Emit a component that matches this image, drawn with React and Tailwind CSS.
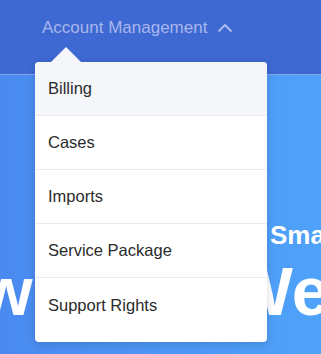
export default function App() {
  const items = ['Billing', 'Cases', 'Imports', 'Service Package', 'Support Rights'];

  return (
    <div className="relative w-[321px] h-[354px] overflow-hidden font-['Liberation_Sans',Arial,sans-serif]">
      {/* top nav */}
      <div className="h-[75px] bg-[#3e69d3] border-b border-[#86a6ec] flex items-start pl-[42px] pt-[18px]">
        <div className="flex items-center gap-[10px] text-[#a8b6ec] text-[17px] leading-[20px]">
          <span>Account Management</span>
          <svg width="16" height="10" viewBox="0 0 16 10" fill="none" stroke="currentColor" strokeWidth="2.2">
            <path d="M1.5 8.5 L8 2 L14.5 8.5" />
          </svg>
        </div>
      </div>

      {/* hero */}
      <div className="h-[279px] bg-gradient-to-r from-[#4a8af0] to-[#4fa2f9] overflow-hidden text-white font-bold">
        <div className="pt-[145px] pl-[270px] text-[26px] leading-[30px] whitespace-nowrap">Smart Service Center</div>
        <div className="mt-[7px] ml-[-111px] text-[68px] leading-[68px] whitespace-nowrap [word-spacing:15px]">How Can We Help?</div>
      </div>

      {/* dropdown */}
      <div className="absolute left-[35px] top-[62px] w-[232px] bg-white rounded-[4px] shadow-[0_2px_8px_rgba(0,0,0,0.15)]">
        <div className="absolute left-[16px] top-[-15px] w-0 h-0 border-l-[15px] border-r-[15px] border-b-[15px] border-l-transparent border-r-transparent border-b-[#f5f6fa]" />
        {items.map((item, i) => (
          <div
            key={item}
            className={`flex items-center pl-[13px] text-[16.5px] text-[#2b2b2b] ${i === 0 ? 'bg-[#f5f6fa] rounded-t-[4px]' : ''} ${i === items.length - 1 ? 'h-[64px] pb-[9px]' : 'h-[54px] border-b border-[#e9ebef]'}`}
          >
            {item}
          </div>
        ))}
      </div>
    </div>
  );
}
